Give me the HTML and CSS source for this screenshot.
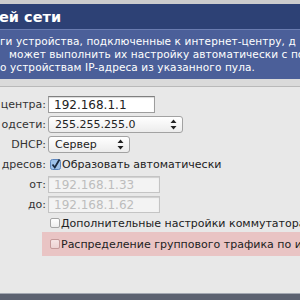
FILE: index.html
```html
<!DOCTYPE html>
<html lang="ru">
<head>
    <meta charset="UTF-8">
    <title>Настройка домашней сети</title>
    <link rel="stylesheet" href="styles.css">
</head>
<body>
    <div class="page">
        <div class="topbar"></div>

        <!-- Title bar -->
        <div class="header">
            <h1>ей сети</h1>
        </div>

        <!-- Description -->
        <div class="desc">
            <p>ги устройства, подключенные к интернет-центру, д</p>
            <p class="indent">может выполнить их настройку автоматически с по</p>
            <p>о устройствам IP-адреса из указанного пула.</p>
        </div>

        <div class="sep"></div>

        <div class="content">
            <div class="form">
                <label>центра:</label>
                <input class="field w1" type="text" value="192.168.1.1">

                <label>одсети:</label>
                <div class="popup w2">
                    <span>255.255.255.0</span>
                    <svg class="arrows" width="7" height="11" viewBox="0 0 7 11"><path d="M3.5 0.5 L6.5 4 L0.5 4 Z M0.5 7 L6.5 7 L3.5 10.5 Z" fill="#222"/></svg>
                </div>

                <label>DHCP:</label>
                <div class="popup w3">
                    <span>Сервер</span>
                    <svg class="arrows" width="7" height="11" viewBox="0 0 7 11"><path d="M3.5 0.5 L6.5 4 L0.5 4 Z M0.5 7 L6.5 7 L3.5 10.5 Z" fill="#222"/></svg>
                </div>

                <label>дресов:</label>
                <div class="check">
                    <svg class="box" width="11" height="11" viewBox="0 0 11 11">
                        <rect x="0.5" y="0.5" width="10" height="10" rx="2" fill="#9fc2ea" stroke="#5d86bd"/>
                        <path d="M2.5 5.5 L4.8 8.5 L9.5 0.5" fill="none" stroke="#1b2a40" stroke-width="1.8"/>
                    </svg>
                    <span>Образовать автоматически</span>
                </div>

                <label>от:</label>
                <input class="field w4" type="text" value="192.168.1.33" disabled>

                <label>до:</label>
                <input class="field w4" type="text" value="192.168.1.62" disabled>

                <span></span>
                <div class="check small">
                    <span class="box empty"></span>
                    <span>Дополнительные настройки коммутатора</span>
                </div>
            </div>

            <div class="pink">
                <div class="check">
                    <span class="box empty"></span>
                    <span>Распределение группового трафика по и</span>
                </div>
            </div>
        </div>

        <div class="footer"></div>
    </div>
</body>
</html>
```

FILE: styles.css
```css
body {
    margin: 0;
    padding: 0;
    font-family: "DejaVu Sans", Verdana, sans-serif;
    background-color: #e8e8e8;
    overflow: hidden;
}
.page {
    width: 300px;
    height: 300px;
    display: flex;
    flex-direction: column;
    overflow: hidden;
}
.topbar {
    height: 4px;
    background-color: #cbcccd;
}
.header {
    height: 25px;
    background-color: #2d4175;
    white-space: nowrap;
}
.header h1 {
    margin: 0 0 0 -1px;
    font-size: 14.5px;
    line-height: 27px;
    font-weight: bold;
    color: #fff;
}
.desc {
    height: 44px;
    padding-top: 5px;
    background-color: #4b5f99;
    border-top: 1px solid #6a7cb0;
    color: #fff;
    white-space: nowrap;
}
.desc p {
    margin: 0;
    font-size: 10.5px;
    line-height: 13px;
    letter-spacing: 0.1px;
}
.desc .indent {
    padding-left: 9px;
}
.sep {
    height: 7px;
    background-color: #dadada;
    border-bottom: 1px solid #b9b9b9;
}
.content {
    flex: 1;
    padding-top: 9px;
    background-color: #e8e8e8;
    white-space: nowrap;
}
.form {
    display: grid;
    grid-template-columns: 46px 1fr;
    column-gap: 2px;
    row-gap: 3px;
    align-items: center;
}
.form label {
    font-size: 11px;
    color: #333;
    text-align: right;
}
.field {
    box-sizing: border-box;
    height: 17px;
    margin: 0;
    padding: 0 0 0 5px;
    border: 1px solid #9d9d9d;
    border-top-color: #7f7f7f;
    box-shadow: inset 0 1px 1px rgba(0, 0, 0, 0.15);
    background-color: #fff;
    font-family: "DejaVu Sans", Verdana, sans-serif;
    font-size: 12px;
    color: #222;
    outline: none;
}
.field:disabled {
    background-color: #f3f3f3;
    color: #bdbdbd;
    border-color: #c4c4c4;
}
.w1 { width: 107px; }
.w2 { width: 135px; }
.w3 { width: 82px; }
.w4 { width: 112px; }
.popup {
    box-sizing: border-box;
    height: 17px;
    display: flex;
    align-items: center;
    justify-content: space-between;
    padding: 0 5px 0 6px;
    border: 1px solid #a2a2a2;
    border-radius: 3px;
    background: linear-gradient(#ffffff, #ececec);
    font-size: 11px;
    color: #222;
}
.check {
    display: flex;
    align-items: center;
    gap: 1px;
    margin-left: 2px;
    height: 17px;
    font-size: 11px;
    color: #222;
}
.check.small {
    height: 14px;
}
.box {
    flex: none;
}
.box.empty {
    box-sizing: border-box;
    width: 10px;
    height: 10px;
    border: 1px solid #a5a5a5;
    border-radius: 2px;
    background: linear-gradient(#ffffff, #eeeeee);
}
.pink {
    margin: 2px 0 0 42px;
    height: 24px;
    display: flex;
    align-items: center;
    padding-left: 6px;
    background-color: #e9c4c4;
}
.pink .box.empty {
    border-color: #c59a9a;
    background: linear-gradient(#f6e4e4, #ecd2d2);
}
.footer {
    height: 6px;
    background-color: #5c6271;
    border-top: 1px solid #a3a8b2;
}
```
